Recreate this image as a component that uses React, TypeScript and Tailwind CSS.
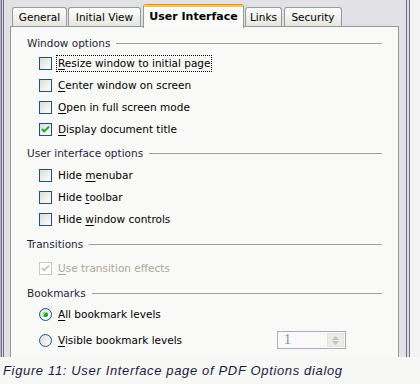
import React from "react";

function Mn({ text, at }: { text: string; at: number }) {
  return (
    <>
      {text.slice(0, at)}
      <span className="underline underline-offset-[2px]">{text[at]}</span>
      {text.slice(at + 1)}
    </>
  );
}

function Box({ checked, disabled }: { checked?: boolean; disabled?: boolean }) {
  return (
    <span
      className={`w-[13px] h-[13px] shrink-0 border flex items-center justify-center ${
        disabled ? "border-[#cac8bb] bg-white" : "border-[#1c5180] bg-linear-to-br from-[#dcdcd7] to-white"
      }`}
    >
      {checked && (
        <svg width="11" height="11" viewBox="0 0 11 11">
          <path
            d="M2 5 L4.2 7.4 L9 2.6"
            fill="none"
            stroke={disabled ? "#cac8bb" : "#21a121"}
            strokeWidth="2"
          />
        </svg>
      )}
    </span>
  );
}

function Radio({ on }: { on?: boolean }) {
  return (
    <span className="w-[13px] h-[13px] shrink-0 rounded-full border border-[#1c5180] bg-linear-to-br from-[#dcdcd7] to-white flex items-center justify-center">
      {on && <span className="w-[5px] h-[5px] rounded-full bg-[#21a121] shadow-[inset_1px_1px_0_#8fe08f]" />}
    </span>
  );
}

function Section({ title }: { title: string }) {
  return (
    <div className="h-[18px] flex items-center gap-[6px] text-[#1e1e3c]">
      <span>{title}</span>
      <div className="flex-1 h-px bg-[#a0a0a4]" />
    </div>
  );
}

function Row({ children, mt }: { children: React.ReactNode; mt: string }) {
  return <div className={`h-[22px] flex items-center gap-[6px] pl-[12px] ${mt}`}>{children}</div>;
}

export default function App() {
  return (
    <div className="w-[420px] h-[384px] bg-[#f7f7f5] overflow-hidden font-['DejaVu_Sans',sans-serif] text-[10.5px] leading-[13px] text-black">
      <div className="flex h-[357px]">
        {/* left frame lines */}
        <div className="flex">
          <div className="w-px bg-[#b8b8c4]" />
          <div className="w-px bg-[#6e6d85]" />
          <div className="w-px bg-[#dcdce2]" />
          <div className="w-px bg-[#6e6d85]" />
        </div>

        <div className="w-[402px] bg-[#e2e1e6] pl-[6px] pr-[7px] flex flex-col">
          {/* tabs */}
          <div className="h-[26px] flex items-end pl-[2px] relative z-10">
            <div className="w-[55px] h-[19px] border border-b-0 border-[#919b9c] rounded-t-[3px] bg-linear-to-b from-white to-[#e6e5de] flex items-center justify-center">
              General
            </div>
            <div className="w-[73px] h-[19px] ml-px border border-b-0 border-[#919b9c] rounded-t-[3px] bg-linear-to-b from-white to-[#e6e5de] flex items-center justify-center">
              Initial View
            </div>
            <div className="w-[101px] h-[24px] ml-[2px] -mb-[2px] border-x border-[#919b9c] rounded-t-[3px] bg-[#fbfbf9] flex flex-col overflow-hidden">
              <div className="h-px bg-[#e68b2c]" />
              <div className="h-[2px] bg-[#ffc73c]" />
              <div className="flex-1 flex items-center justify-center font-bold text-[11px] pb-[2px]">User Interface</div>
            </div>
            <div className="w-[37px] h-[19px] ml-px border border-b-0 border-[#919b9c] rounded-t-[3px] bg-linear-to-b from-white to-[#e6e5de] flex items-center justify-center">
              Links
            </div>
            <div className="w-[58px] h-[19px] ml-[2px] border border-b-0 border-[#919b9c] rounded-t-[3px] bg-linear-to-b from-white to-[#e6e5de] flex items-center justify-center">
              Security
            </div>
          </div>

          {/* panel */}
          <div className="flex-1 border border-b-0 border-[#919b9c] bg-[#f9f9f7] pl-[16px] pr-[16px] pt-[7px]">
            <Section title="Window options" />
            <Row mt="">
              <Box />
              <span className="outline-1 outline-dotted outline-black outline-offset-[1px]">
                <Mn text="Resize window to initial page" at={0} />
              </span>
            </Row>
            <Row mt="">
              <Box />
              <span><Mn text="Center window on screen" at={0} /></span>
            </Row>
            <Row mt="">
              <Box />
              <span><Mn text="Open in full screen mode" at={0} /></span>
            </Row>
            <Row mt="">
              <Box checked />
              <span><Mn text="Display document title" at={0} /></span>
            </Row>

            <div className="mt-[4px]"><Section title="User interface options" /></div>
            <Row mt="mt-[2px]">
              <Box />
              <span><Mn text="Hide menubar" at={5} /></span>
            </Row>
            <Row mt="">
              <Box />
              <span><Mn text="Hide toolbar" at={5} /></span>
            </Row>
            <Row mt="">
              <Box />
              <span><Mn text="Hide window controls" at={5} /></span>
            </Row>

            <div className="mt-[5px]"><Section title="Transitions" /></div>
            <Row mt="mt-[4px]">
              <Box checked disabled />
              <span className="text-[#aca899]"><Mn text="Use transition effects" at={0} /></span>
            </Row>

            <div className="mt-[5px]"><Section title="Bookmarks" /></div>
            <Row mt="mt-px">
              <Radio on />
              <span><Mn text="All bookmark levels" at={0} /></span>
            </Row>
            <Row mt="mt-[4px]">
              <Radio />
              <span><Mn text="Visible bookmark levels" at={0} /></span>
              <div className="ml-auto mr-[36px] w-[69px] h-[18px] border border-[#a9abc0] bg-[#f9f9f7] flex items-center justify-between pl-[6px] pr-[1px]">
                <span className="font-['Liberation_Serif',serif] text-[14px] text-[#8a8aa8] leading-[14px]">1</span>
                <div className="w-[17px] h-[14px] bg-[#ecebe4] border border-[#e4e3dc] flex flex-col items-center justify-center gap-[1px]">
                  <svg width="7" height="4" viewBox="0 0 7 4"><path d="M0 4 L3.5 0 L7 4 Z" fill="#c4c3bc" /></svg>
                  <svg width="7" height="4" viewBox="0 0 7 4"><path d="M0 0 L3.5 4 L7 0 Z" fill="#c4c3bc" /></svg>
                </div>
              </div>
            </Row>
          </div>
        </div>

        {/* right frame lines */}
        <div className="flex">
          <div className="w-px bg-[#6e6d85]" />
          <div className="w-[2px] bg-[#dcdce2]" />
          <div className="w-px bg-[#6e6d85]" />
        </div>
        <div className="flex-1 bg-[#f3f3f3]" />
      </div>

      <div className="h-[27px] flex items-center pl-[3px] font-['Liberation_Sans',sans-serif] italic text-[13px] tracking-[0.65px] text-[#1b1a45]">
        Figure 11: User Interface page of PDF Options dialog
      </div>
    </div>
  );
}
